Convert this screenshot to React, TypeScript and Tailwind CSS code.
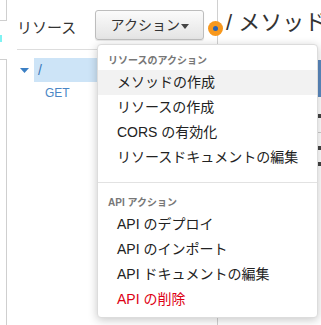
import React from "react";

const jp = "font-['Liberation_Sans','Noto_Sans_CJK_JP',sans-serif]";

const resourceActions = ["メソッドの作成", "リソースの作成", "CORS の有効化", "リソースドキュメントの編集"];
const apiActions = ["API のデプロイ", "API のインポート", "API ドキュメントの編集"];

function ActionsMenu() {
  return (
    <div className="absolute left-[97px] top-[44px] w-[221px] h-[274px] bg-white border border-[#dcdcdc] rounded-[4px] shadow-[0_2px_10px_rgba(0,0,0,0.22)] text-[#222]">
      <div className="pl-[10px] pt-[11px] pb-[4px] text-[10px] leading-[10px] font-bold text-[#777]">リソースのアクション</div>
      {resourceActions.map((label, i) => (
        <div
          key={label}
          className={`h-[25px] flex items-center pl-[19px] text-[14px] ${i === 0 ? "bg-[#f2f2f2]" : ""}`}
        >
          {label}
        </div>
      ))}
      <div className="mt-[12px] border-t border-[#e2e2e2]" />
      <div className="pl-[10px] pt-[15px] pb-[4px] text-[10px] leading-[10px] font-bold text-[#777]">API アクション</div>
      {apiActions.map((label) => (
        <div key={label} className="h-[25px] flex items-center pl-[19px] text-[14px]">
          {label}
        </div>
      ))}
      <div className="h-[25px] flex items-center pl-[19px] text-[14px] text-[#dd0014]">API の削除</div>
    </div>
  );
}

export default function App() {
  return (
    <div className={`relative flex w-[321px] h-[325px] overflow-hidden bg-white ${jp}`}>
      {/* far left strip */}
      <div className="w-[7px] flex flex-col shrink-0">
        <div className="h-[21px] border-r border-b border-[#cfcfcf]" />
        <div className="h-[38px] pt-[14px]">
          <div className="w-[2px] h-[7px] bg-[#7ff3f3]" />
        </div>
        <div className="flex-1 border-t border-r border-[#cfcfcf]" />
      </div>

      {/* resources panel */}
      <div className="w-[210px] shrink-0 pl-[10px]">
        <div className="h-[50px] flex items-start border-b border-[#dddddd]">
          <div className="pt-[18px] text-[15px] leading-[20px] text-[#333]">リソース</div>
          <button className="ml-[19px] mt-[10px] h-[30px] w-[109px] rounded-[3px] border border-[#bdbdbd] bg-gradient-to-b from-[#fbfbfb] to-[#e4e4e4] shadow-[0_1px_1px_rgba(0,0,0,0.1)] flex items-center justify-center text-[14px] text-[#333]">
            アクション
            <svg width="8" height="5" viewBox="0 0 8 5" className="ml-[1px] mt-[2px]">
              <path d="M0 0h8L4 5z" fill="#444" />
            </svg>
          </button>
        </div>
        <div className="pt-[8px] pl-[3px]">
          <div className="flex items-center h-[24px]">
            <svg width="9" height="5" viewBox="0 0 9 5" className="shrink-0">
              <path d="M0 0h9L4.5 5z" fill="#3b7fc4" />
            </svg>
            <div className="ml-[5px] flex-1 h-[24px] bg-[#cde4f7] flex items-center pl-[4px] text-[14px] text-[#3b78b8]">/</div>
          </div>
          <div className="pl-[25px] pt-[4px] text-[12px] leading-[14px] text-[#4a86c5]">GET</div>
        </div>
      </div>

      {/* methods panel */}
      <div className="flex-1 border-l border-[#d0d0d0] pl-[8px]">
        <div className="pt-[9px] text-[22px] leading-[28px] text-[#333] whitespace-nowrap">/ メソッド</div>
        <div className="ml-[92px] mt-[23px] flex flex-col">
          <div className="h-[37px] w-[6px] bg-[#5b8ac0]" />
          <div className="mt-[17px] h-[4px] w-[4px] bg-[#444]" />
          <div className="mt-[14px] border-t border-[#ccc]" />
          <div className="mt-[13px] h-[4px] w-[4px] bg-[#444]" />
          <div className="mt-[12px] h-[4px] w-[4px] bg-[#444]" />
        </div>
      </div>

      {/* resize handle */}
      <div className="absolute left-[208px] top-[21px] w-[15px] h-[15px] rounded-full bg-[#f7981d] flex items-center justify-center">
        <div className="w-[5px] h-[5px] rounded-full bg-[#2a63b4]" />
      </div>

      <ActionsMenu />
    </div>
  );
}
